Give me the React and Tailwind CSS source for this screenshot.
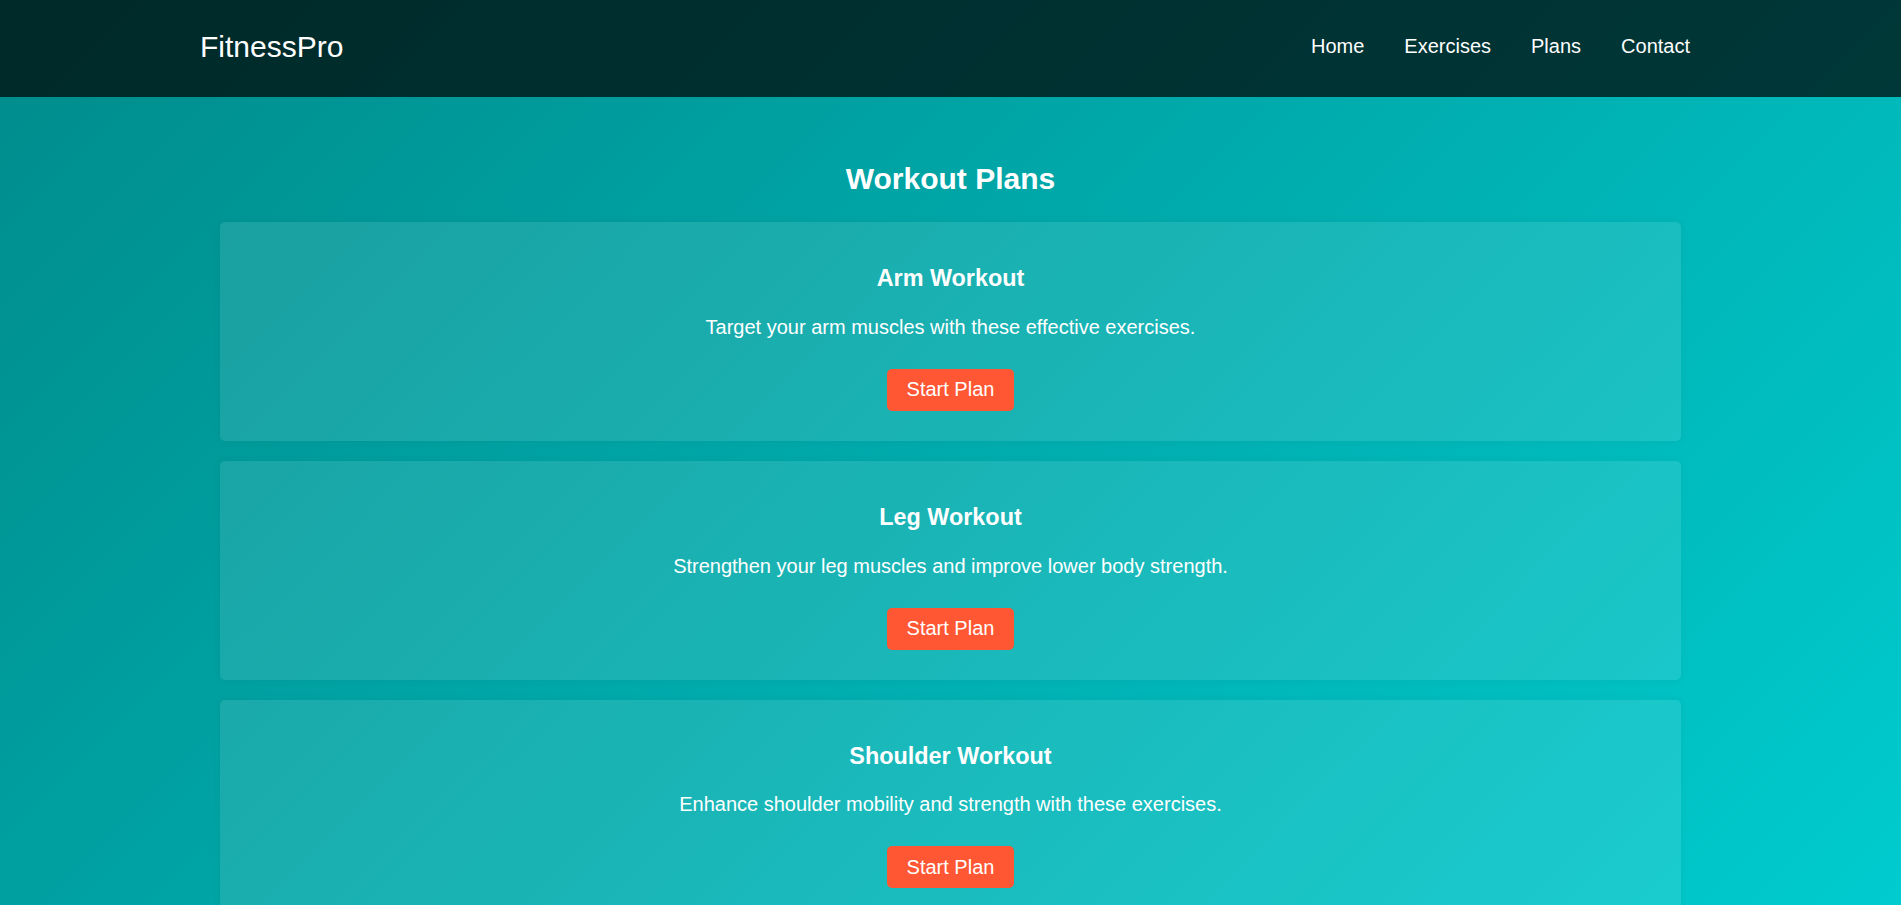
import React from "react";

const plans = [
  {
    title: "Arm Workout",
    description: "Target your arm muscles with these effective exercises.",
  },
  {
    title: "Leg Workout",
    description: "Strengthen your leg muscles and improve lower body strength.",
  },
  {
    title: "Shoulder Workout",
    description: "Enhance shoulder mobility and strength with these exercises.",
  },
];

const navLinks = ["Home", "Exercises", "Plans", "Contact"];

const App = () => {
  return (
    <div className="min-h-screen bg-[linear-gradient(135deg,#008b8b,#00ced1)] text-white font-['Liberation_Sans',Arial,sans-serif] text-[20px]">
      {/* Header */}
      <header className="h-[97px] pb-[5px] bg-black/70 flex items-center justify-between pl-[200px] pr-[211px]">
        <div className="text-[30px] leading-[35px]">FitnessPro</div>
        <nav className="flex items-center gap-[40px]">
          {navLinks.map((link) => (
            <a key={link} href="#" className="text-white text-[20px] leading-[23px]">
              {link}
            </a>
          ))}
        </nav>
      </header>

      {/* Plans */}
      <section className="pt-[64px] pb-[110px] px-[220px]">
        <h2 className="text-[30px] leading-[35px] font-bold text-center mb-[26px]">
          Workout Plans
        </h2>
        <div className="flex flex-col gap-[20px]">
          {plans.map((plan) => (
            <div
              key={plan.title}
              className="bg-white/10 rounded-[5px] p-[20px] text-center shadow-[0_0_10px_rgba(0,0,0,0.05)]"
            >
              <h3 className="text-[23.4px] leading-[27px] font-bold mt-[23.4px]">
                {plan.title}
              </h3>
              <p className="text-[20px] leading-[23px] mt-[23.4px] mb-[20px]">
                {plan.description}
              </p>
              <button className="inline-block my-[10px] bg-[#ff5733] text-white rounded-[5px] px-[20px] h-[42px] text-[20px] leading-[23px]">
                Start Plan
              </button>
            </div>
          ))}
        </div>
      </section>
    </div>
  );
};

export default App;
